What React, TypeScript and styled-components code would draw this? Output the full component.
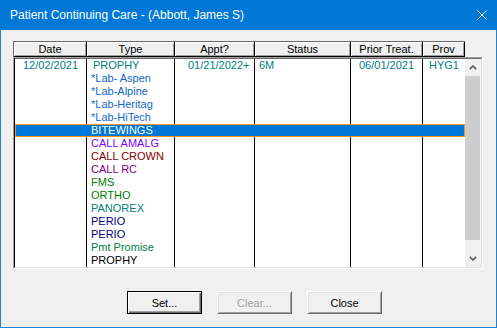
import React from "react";
import styled, { createGlobalStyle } from "styled-components";

const GlobalStyle = createGlobalStyle`
  html, body {
    margin: 0;
    padding: 0;
    background: #f0f0f0;
  }
  * {
    box-sizing: border-box;
  }
`;

type Align = "left" | "center";

const columns: { title: string; width: number; align: Align; pad: number }[] = [
  { title: "Date", width: 72, align: "center", pad: 0 },
  { title: "Type", width: 88, align: "left", pad: 4 },
  { title: "Appt?", width: 80, align: "left", pad: 13 },
  { title: "Status", width: 96, align: "left", pad: 4 },
  { title: "Prior Treat.", width: 72, align: "center", pad: 0 },
  { title: "Prov", width: 42, align: "center", pad: 0 },
];

type Row = {
  cells: string[];
  color: string;
  indent?: boolean;
  selected?: boolean;
};

const LAB = "#1068c8";

const rows: Row[] = [
  { cells: ["12/02/2021", "PROPHY", "01/21/2022+", "6M", "06/01/2021", "HYG1"], color: "#008080", indent: true },
  { cells: ["", "*Lab- Aspen"], color: LAB },
  { cells: ["", "*Lab-Alpine"], color: LAB },
  { cells: ["", "*Lab-Heritag"], color: LAB },
  { cells: ["", "*Lab-HiTech"], color: LAB },
  { cells: ["", "BITEWINGS"], color: "#ffffff", selected: true },
  { cells: ["", "CALL AMALG"], color: "#8000ff" },
  { cells: ["", "CALL CROWN"], color: "#800000" },
  { cells: ["", "CALL RC"], color: "#800080" },
  { cells: ["", "FMS"], color: "#008000" },
  { cells: ["", "ORTHO"], color: "#008000" },
  { cells: ["", "PANOREX"], color: "#008080" },
  { cells: ["", "PERIO"], color: "#000080" },
  { cells: ["", "PERIO"], color: "#000080" },
  { cells: ["", "Pmt Promise"], color: "#008040" },
  { cells: ["", "PROPHY"], color: "#000000" },
];

const Chevron = ({ down }: { down?: boolean }) => (
  <svg width="8" height="5" viewBox="0 0 8 5">
    <path
      d={down ? "M0.8 0.8 L4 4 L7.2 0.8" : "M0.8 4.2 L4 1 L7.2 4.2"}
      fill="none"
      stroke="#606060"
      strokeWidth="1.7"
    />
  </svg>
);

export default function App() {
  return (
    <>
      <GlobalStyle />
      <Window>
        <TitleBar>
          <Title>Patient Continuing Care - (Abbott, James S)</Title>
          <svg width="10" height="10" viewBox="0 0 10 10">
            <path d="M0.5 0.5 L9.5 9.5 M9.5 0.5 L0.5 9.5" stroke="#fff" strokeWidth="1" />
          </svg>
        </TitleBar>
        <Body>
          <ListArea>
            <Header>
              {columns.map((c, i) => (
                <HeaderCell key={c.title} $width={i === 0 ? c.width + 1 : c.width}>
                  {c.title}
                </HeaderCell>
              ))}
            </Header>
            <ListBox>
              <ListInner>
                <Rows>
                  {rows.map((r, ri) => (
                    <RowLine key={ri} $selected={r.selected} $color={r.color}>
                      {columns.map((c, ci) => (
                        <Cell
                          key={ci}
                          $width={c.width}
                          $align={c.align}
                          $pad={ci === 1 && r.indent ? c.pad + 2 : c.pad}
                          $last={ci === columns.length - 1}
                          $selected={r.selected}
                        >
                          {r.cells[ci] ?? ""}
                        </Cell>
                      ))}
                    </RowLine>
                  ))}
                </Rows>
                <ScrollBar>
                  <ArrowBox>
                    <Chevron />
                  </ArrowBox>
                  <Thumb />
                  <Track />
                  <ArrowBox>
                    <Chevron down />
                  </ArrowBox>
                </ScrollBar>
              </ListInner>
            </ListBox>
          </ListArea>
          <Buttons>
            <Button $default>Set...</Button>
            <Button disabled>Clear...</Button>
            <Button>Close</Button>
          </Buttons>
        </Body>
      </Window>
    </>
  );
}

const Window = styled.div`
  width: 497px;
  height: 328px;
  display: flex;
  flex-direction: column;
  font-family: "Liberation Sans", Arial, sans-serif;
`;

const TitleBar = styled.div`
  height: 30px;
  background: #0078d7;
  display: flex;
  align-items: center;
  justify-content: space-between;
  padding: 0 10px 0 10px;
`;

const Title = styled.span`
  color: #ffffff;
  font-size: 12px;
`;

const Body = styled.div`
  flex: 1;
  background: #f0f0f0;
  border: 1px solid #1883d7;
  border-top: 0;
  display: flex;
  flex-direction: column;
`;

const ListArea = styled.div`
  margin: 11px 0 0 12px;
  display: flex;
  flex-direction: column;
`;

const Header = styled.div`
  display: flex;
  width: 452px;
  height: 16px;
  border-top: 1px solid #696969;
  border-left: 1px solid #696969;
`;

const HeaderCell = styled.div<{ $width: number }>`
  width: ${(p) => p.$width}px;
  height: 15px;
  background: #f0f0f0;
  border-right: 1px solid #000;
  border-bottom: 1px solid #000;
  box-shadow: inset 1px 1px #ffffff, inset -1px -1px #a0a0a0;
  font-size: 11px;
  line-height: 14px;
  color: #000;
  text-align: center;
  white-space: nowrap;
`;

const ListBox = styled.div`
  width: 470px;
  height: 212px;
  border: 1px solid;
  border-color: #a0a0a0 #ffffff #ffffff #a0a0a0;
`;

const ListInner = styled.div`
  height: 100%;
  display: flex;
  background: #ffffff;
  border: 1px solid;
  border-color: #696969 #e3e3e3 #e3e3e3 #000000;
`;

const Rows = styled.div`
  width: 450px;
  display: flex;
  flex-direction: column;
`;

const RowLine = styled.div<{ $selected?: boolean; $color: string }>`
  display: flex;
  height: 13px;
  color: ${(p) => p.$color};
  background: ${(p) => (p.$selected ? "#0078d7" : "transparent")};
  box-shadow: ${(p) => (p.$selected ? "inset 0 0 0 1px #f7931e" : "none")};
`;

const Cell = styled.div<{
  $width: number;
  $align: Align;
  $pad: number;
  $last: boolean;
  $selected?: boolean;
}>`
  width: ${(p) => p.$width}px;
  height: 13px;
  padding-left: ${(p) => p.$pad}px;
  text-align: ${(p) => p.$align};
  border-right: ${(p) => (p.$last ? "0" : p.$selected ? "1px solid transparent" : "1px solid #000")};
  font-size: 11px;
  line-height: 13px;
  white-space: nowrap;
  overflow: hidden;
`;

const ScrollBar = styled.div`
  width: 16px;
  background: #f0f0f0;
  display: flex;
  flex-direction: column;
`;

const ArrowBox = styled.div`
  height: 17px;
  display: flex;
  align-items: center;
  justify-content: center;
  padding-right: 1px;
`;

const Thumb = styled.div`
  height: 164px;
  width: 15px;
  background: #cdcdcd;
`;

const Track = styled.div`
  flex: 1;
`;

const Buttons = styled.div`
  display: flex;
  gap: 15px;
  margin-top: 22px;
  padding-left: 126px;
`;

const Button = styled.button<{ $default?: boolean }>`
  width: 75px;
  height: 23px;
  padding: 0;
  font-family: "Liberation Sans", Arial, sans-serif;
  font-size: 11px;
  color: #000;
  background: #f0f0f0;
  border: 1px solid;
  border-color: ${(p) => (p.$default ? "#000" : "#ffffff #696969 #696969 #ffffff")};
  box-shadow: ${(p) =>
    p.$default
      ? "inset 1px 1px #ffffff, inset -1px -1px #696969, inset -2px -2px #a0a0a0"
      : "inset 1px 1px #e3e3e3, inset -1px -1px #a0a0a0"};

  &:disabled {
    color: #a0a0a0;
  }
`;
